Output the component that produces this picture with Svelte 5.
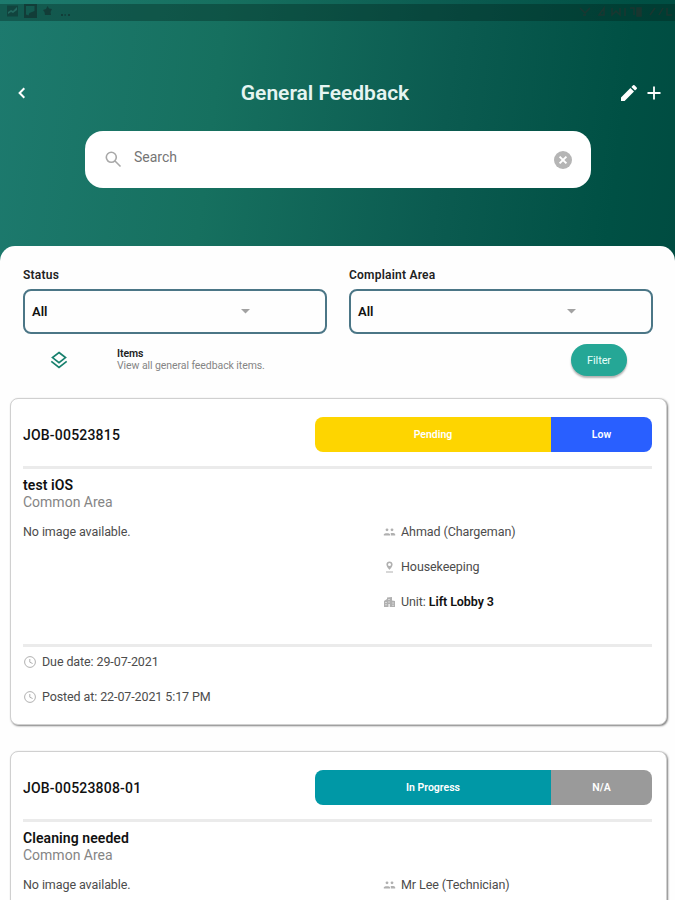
<script lang="ts">
	type Job = {
		id: string;
		status: string;
		statusTone: string;
		priority: string;
		priorityTone: string;
		title: string;
		area: string;
		assignee: string;
		department: string;
		unit: string;
		due: string;
		posted: string;
	};

	const filters = ['Status', 'Complaint Area'];

	const jobs: Job[] = [
		{
			id: 'JOB-00523815',
			status: 'Pending',
			statusTone: 'pending',
			priority: 'Low',
			priorityTone: 'low',
			title: 'test iOS',
			area: 'Common Area',
			assignee: 'Ahmad (Chargeman)',
			department: 'Housekeeping',
			unit: 'Lift Lobby 3',
			due: '29-07-2021',
			posted: '22-07-2021 5:17 PM'
		},
		{
			id: 'JOB-00523808-01',
			status: 'In Progress',
			statusTone: 'progress',
			priority: 'N/A',
			priorityTone: 'none',
			title: 'Cleaning needed',
			area: 'Common Area',
			assignee: 'Mr Lee (Technician)',
			department: '',
			unit: '',
			due: '',
			posted: ''
		}
	];
</script>

{#snippet clock()}
	<svg class="clock" viewBox="0 0 12 12">
		<circle cx="6" cy="6" r="5.4" />
		<path d="M5.8 3v3.2l2.8 1.3" />
	</svg>
{/snippet}

<div class="screen">
	<header>
		<div class="statusbar">
			<svg class="notices" width="70" height="17" viewBox="0 0 70 17">
				<path d="M7 1.500h11v11H7z" opacity=".75" />
				<path class="cut" d="M8 8l3-2 2 1 4-4v3l-4 3-2-1-3 2z" />
				<path d="M24 0h13v14H24zM26 2v8.500l2.500 1 1-2.500 5-2V2z" fill-rule="evenodd" />
				<path d="M47.500 2l1.500 2.500 3 .5-1.500 3 .5 3h-6l-.5-3-1.500-2 3-1z" />
				<path d="M61 10h2v2h-2zM64.500 10h1.200v2h-1.200zM68 10h2v2h-2z" />
			</svg>
			<svg class="signals" width="100" height="17" viewBox="0 0 100 17">
				<path d="M5 4l5 5 5-5M8 11h3M24 11l5-7v7zM37 4v7l4-4 4 4V4M50 4v8M55 4h4v7M75 11l5-7M84 11l4-7M92 4v7h5" />
				<path class="solid" d="M62 4h4v8h-4z" />
			</svg>
		</div>

		<div class="topbar">
			<svg class="back" width="10" height="12" viewBox="0 0 10 12"><path d="M7.300 1.300L2.600 6l4.700 4.700" /></svg>
			<h1>General Feedback</h1>
			<div class="actions">
				<svg width="18" height="18" viewBox="0 0 18 18">
					<path d="M1 13.400V17h3.600L14 7.600 10.400 4zM16.700 4.900a1 1 0 0 0 0-1.400l-2.200-2.200a1 1 0 0 0-1.400 0L11.400 3 15 6.600z" />
				</svg>
				<svg width="14" height="14" viewBox="0 0 14 14"><path d="M6.100.5h1.800v5.600h5.600v1.800H7.900v5.600H6.100V7.900H.5V6.100h5.600z" /></svg>
			</div>
		</div>

		<div class="search">
			<svg class="lens" width="17" height="17" viewBox="0 0 17 17">
				<circle cx="6.300" cy="6.300" r="5" />
				<path d="M10 10l5.500 5.500" />
			</svg>
			<span>Search</span>
			<svg class="clear" width="18" height="18" viewBox="0 0 18 18">
				<circle cx="9" cy="9" r="9" />
				<path d="M5.600 5.600l6.800 6.800M12.400 5.600l-6.800 6.800" />
			</svg>
		</div>
	</header>

	<main>
		<div class="filters">
			{#each filters as label}
				<div class="field">
					<span class="label">{label}</span>
					<div class="select">
						<span>All</span>
						<svg width="9" height="5" viewBox="0 0 9 5"><path d="M0 0h9L4.500 4.500z" /></svg>
					</div>
				</div>
			{/each}
		</div>

		<div class="items">
			<svg class="layers" width="18" height="18" viewBox="0 0 18 18">
				<path d="M9 1.500l6.500 5.100L9 11.700 2.500 6.600z" />
				<path d="M1.300 10.300L9 16.300l7.700-6" />
			</svg>
			<div class="items-text">
				<strong>Items</strong>
				<span>View all general feedback items.</span>
			</div>
			<button>Filter</button>
		</div>

		{#each jobs as job}
			<article>
				<div class="job-head">
					<span class="job-id">{job.id}</span>
					<div class="badges">
						<span class="status {job.statusTone}">{job.status}</span>
						<span class="priority {job.priorityTone}">{job.priority}</span>
					</div>
				</div>
				<hr />
				<h2>{job.title}</h2>
				<p class="area">{job.area}</p>
				<div class="details">
					<span>No image available.</span>
					<ul>
						<li>
							<svg viewBox="0 0 13 12">
								<circle cx="4" cy="3.800" r="1.400" />
								<circle cx="9" cy="3.800" r="1.400" />
								<path d="M.8 9.500V8.300C1 6.800 7 6.800 7.200 8.300v1.200zM8 9.500V8.200L7.500 7.300c2-.5 4.500 0 4.700 1v1.200z" />
							</svg>
							{job.assignee}
						</li>
						{#if job.department}
							<li>
								<svg viewBox="0 0 13 12">
									<path fill-rule="evenodd" d="M6.500.5C4.700.5 3.400 1.800 3.400 3.500c0 2.200 3.100 5.300 3.100 5.300s3.100-3.100 3.100-5.300c0-1.700-1.300-3-3.100-3zm0 1.500a1.500 1.500 0 1 1 0 3 1.500 1.500 0 0 1 0-3zM3 10.500h7v1H3z" />
								</svg>
								{job.department}
							</li>
						{/if}
						{#if job.unit}
							<li>
								<svg viewBox="0 0 13 12">
									<path fill-rule="evenodd" d="M1 11V5l3-2V1.500L9 1v3.500l3 .5v6zM2.500 6v1h1V6zm0 2.200v1h1v-1zM5.500 3v1h1V3zm0 2.500v1h1v-1zm0 2.500v3h1.200V8zM9.500 6.500v1h1v-1zm0 2.200v1h1v-1z" />
								</svg>
								<span>Unit: <b>{job.unit}</b></span>
							</li>
						{/if}
					</ul>
				</div>
				{#if job.due}
					<hr />
					<div class="dates">
						<div>{@render clock()}Due date: {job.due}</div>
						<div>{@render clock()}Posted at: {job.posted}</div>
					</div>
				{/if}
			</article>
		{/each}
	</main>
</div>

<style>
	:global(body) {
		overflow: hidden;
	}

	.screen {
		height: 900px;
		overflow: hidden;
		box-sizing: border-box;
		font-family: Roboto, 'Liberation Sans', sans-serif;
		font-size: 12px;
		color: #4c4c4c;
		background: linear-gradient(97deg, #1d7a6e 0, #16705f 32%, #0b5b50 65%, #005044 90%, #004c41 100%) no-repeat;
		background-size: 100% 270px;
	}

	header {
		height: 246px;
	}

	svg {
		display: block;
		flex: none;
	}

	.statusbar {
		display: flex;
		justify-content: space-between;
		height: 17px;
		border-top: 4px solid transparent;
		background: rgba(0, 25, 20, 0.32);
		background-clip: padding-box;
	}

	.notices {
		fill: #123d38;
	}

	.notices .cut {
		fill: #23685f;
	}

	.signals {
		fill: none;
		stroke: #402c2b;
		stroke-width: 1.5;
		opacity: 0.4;
	}

	.signals .solid {
		fill: #402c2b;
	}

	.topbar {
		display: grid;
		grid-template-columns: 35px 1fr 60px;
		align-items: center;
		height: 40px;
		margin-top: 52px;
	}

	.back {
		margin-left: 17px;
		fill: none;
		stroke: #fff;
		stroke-width: 2;
	}

	h1 {
		margin: 0;
		text-align: center;
		font-size: 21px;
		font-weight: 600;
		line-height: 24px;
		letter-spacing: -0.02px;
		color: #e6f5f2;
	}

	.actions {
		display: flex;
		align-items: center;
		gap: 9px;
		margin-left: 5px;
		fill: #fff;
	}

	.search {
		display: flex;
		align-items: center;
		box-sizing: border-box;
		width: 506px;
		height: 57px;
		margin: 18px 0 0 85px;
		padding: 0 19px 0 20px;
		border-radius: 18px;
		background: #fff;
		font-size: 14px;
		color: #757575;
	}

	.search span {
		flex: 1;
		margin: -5px 0 0 12px;
	}

	.lens {
		fill: none;
		stroke: #a8a8a8;
		stroke-width: 1.6;
	}

	.clear {
		fill: #b5b5b5;
	}

	.clear path {
		stroke: #fff;
		stroke-width: 2;
	}

	main {
		height: 654px;
		box-sizing: border-box;
		padding: 20px 8px 0 10px;
		border-radius: 15px 15px 0 0;
		background: #fefefe;
	}

	.filters {
		display: grid;
		grid-template-columns: 304px 304px;
		gap: 22px;
		padding-left: 13px;
	}

	.label {
		display: block;
		height: 23px;
		line-height: 18px;
		font-weight: 600;
		letter-spacing: 0.22px;
		color: #222;
	}

	.select {
		display: flex;
		align-items: center;
		justify-content: space-between;
		box-sizing: border-box;
		height: 45px;
		padding: 0 75px 0 7px;
		border: 2px solid #4b7686;
		border-radius: 8px;
		font-size: 13px;
		font-weight: 600;
		color: #111;
	}

	.select svg {
		fill: #a2a2a2;
	}

	.items {
		display: flex;
		align-items: center;
		height: 52px;
		padding: 0 40px 0 40px;
		margin-bottom: 12px;
	}

	.layers {
		fill: none;
		stroke: #17806d;
		stroke-width: 1.7;
	}

	.items-text {
		flex: 1;
		margin-left: 49px;
		font-size: 10.5px;
		line-height: 12px;
		letter-spacing: -0.08px;
		color: #858585;
	}

	.items-text strong,
	.items-text span {
		display: block;
	}

	.items-text strong {
		font-weight: 600;
		color: #222;
	}

	button {
		width: 56px;
		height: 32px;
		padding: 0;
		border: 0;
		border-radius: 16px;
		background: #25a796;
		box-shadow: 0 2px 2px rgba(0, 0, 0, 0.3);
		font: 11px Roboto, sans-serif;
		letter-spacing: -0.1px;
		color: #e6fffa;
	}

	article {
		box-sizing: border-box;
		height: 327px;
		margin-bottom: 26px;
		padding: 18px 14px 0 12px;
		border: 1px solid #d0d0d0;
		border-radius: 8px;
		background: #fff;
		box-shadow: 1px 1px 2px 0 rgba(0, 0, 0, 0.5);
	}

	.job-head {
		display: flex;
		align-items: center;
		justify-content: space-between;
		height: 35px;
		margin-bottom: 14px;
	}

	.job-id {
		font-size: 14px;
		font-weight: 500;
		letter-spacing: 0.2px;
		color: #111;
	}

	.badges {
		display: flex;
		width: 337px;
		height: 35px;
		border-radius: 8px;
		overflow: hidden;
		font-size: 10.5px;
		font-weight: 600;
		line-height: 35px;
		text-align: center;
		color: #fff;
	}

	.status {
		width: 236px;
	}

	.priority {
		flex: 1;
	}

	.pending {
		background: #fed500;
	}

	.low {
		background: #295fff;
	}

	.progress {
		background: #0098a6;
	}

	.none {
		background: #9a9a9a;
	}

	hr {
		height: 3px;
		margin: 0;
		border: 0;
		background: #ebebeb;
	}

	h2 {
		margin: 7px 0 0;
		font-size: 14px;
		font-weight: 600;
		line-height: 18px;
		letter-spacing: 0.08px;
		color: #111;
	}

	.area {
		margin: 0;
		font-size: 14px;
		line-height: 16px;
		color: #858585;
	}

	.details {
		display: grid;
		grid-template-columns: 360px 1fr;
		height: 134px;
		line-height: 16px;
		padding-top: 14px;
		box-sizing: border-box;
		font-size: 12.5px;
		letter-spacing: -0.08px;
	}

	ul {
		display: grid;
		gap: 19px;
		align-content: start;
		margin: 0;
		padding: 0;
		list-style: none;
	}

	li {
		display: flex;
		align-items: center;
	}

	li svg {
		width: 13px;
		height: 12px;
		margin-right: 5px;
		fill: #b0b0b0;
	}

	b {
		font-weight: 600;
		color: #111;
	}

	.dates {
		display: grid;
		gap: 19px;
		padding-top: 7px;
		font-size: 12.5px;
		line-height: 16px;
		letter-spacing: -0.1px;
	}

	.dates div {
		display: flex;
		align-items: center;
	}

	.clock {
		width: 12px;
		height: 12px;
		margin: 0 6px 0 1px;
		fill: none;
		stroke: #b0b0b0;
	}
</style>
